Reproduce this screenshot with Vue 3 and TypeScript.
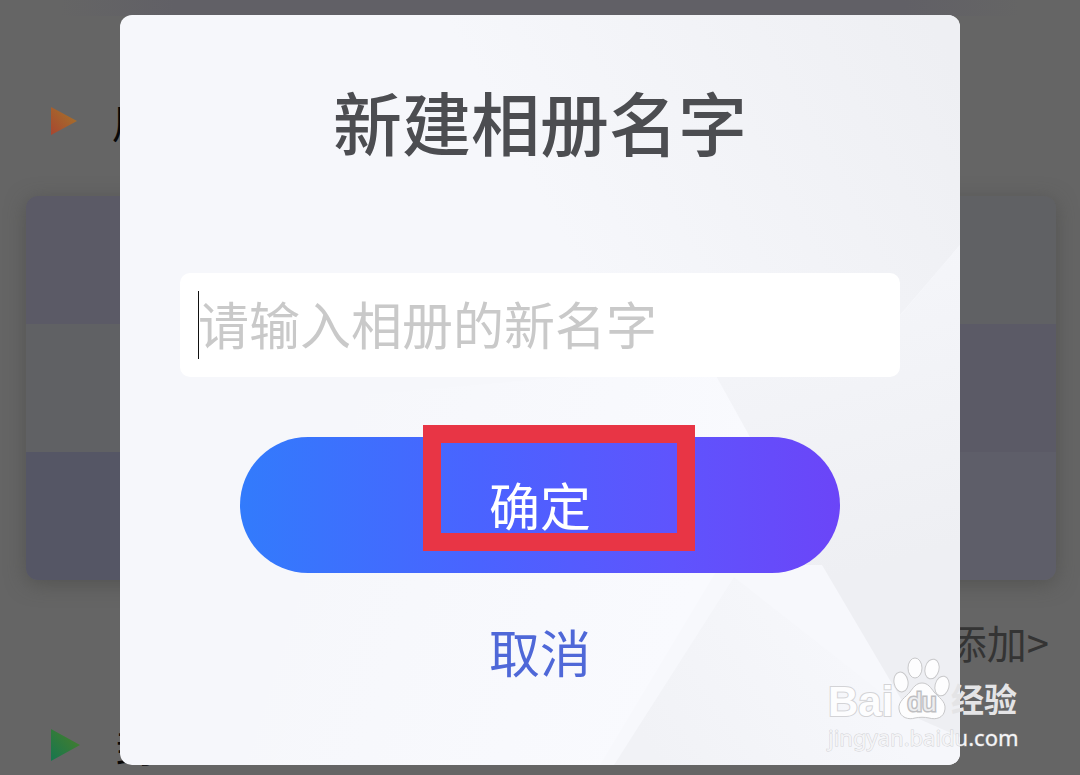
<script setup lang="ts">
import { ref } from 'vue'

const albumName = ref('')
const rows: string[] = ['a', 'b', 'c']
</script>

<template>
  <div class="screen">
    <main class="page" aria-hidden="true">
      <div class="strip"></div>
      <div class="heading first">
        <svg class="marker" viewBox="0 0 30 34">
          <defs>
            <linearGradient id="warm" x1="0" y1="1" x2="1" y2="0">
              <stop offset="0" stop-color="#a84630" />
              <stop offset="1" stop-color="#a4782a" />
            </linearGradient>
          </defs>
          <path d="M1 3 27 17 1 31Z" fill="url(#warm)" />
        </svg>
        <span>用</span>
      </div>
      <div class="album">
        <template v-for="row in rows" :key="row">
          <div :class="['cell', 'left-' + row]"></div>
          <div :class="['cell', 'right-' + row]"></div>
        </template>
      </div>
      <div class="add">添加&gt;</div>
      <div class="heading second">
        <svg class="marker" viewBox="0 0 30 34">
          <defs>
            <linearGradient id="cool" x1="0" y1="1" x2="1" y2="0">
              <stop offset="0" stop-color="#16764f" />
              <stop offset="1" stop-color="#4c7f28" />
            </linearGradient>
          </defs>
          <path d="M1 1 30 17 1 33Z" fill="url(#cool)" />
        </svg>
        <span>封</span>
      </div>
    </main>

    <form class="dialog" role="dialog" aria-labelledby="dialog-title" @submit.prevent>
      <svg class="facets" viewBox="0 0 840 750" preserveAspectRatio="none" aria-hidden="true">
        <defs>
          <linearGradient id="f1" gradientUnits="userSpaceOnUse" x1="460" y1="260" x2="840" y2="60">
            <stop offset="0" stop-color="#eeeff3" stop-opacity="0" />
            <stop offset="1" stop-color="#eeeff3" />
          </linearGradient>
          <linearGradient id="f2" gradientUnits="userSpaceOnUse" x1="720" y1="240" x2="800" y2="540">
            <stop offset="0" stop-color="#f5f6fa" />
            <stop offset="1" stop-color="#eeeff3" />
          </linearGradient>
          <linearGradient id="f3" gradientUnits="userSpaceOnUse" x1="180" y1="500" x2="560" y2="620">
            <stop offset="0" stop-color="#f9fafe" stop-opacity="0" />
            <stop offset="1" stop-color="#f9fafe" />
          </linearGradient>
          <linearGradient id="f4" gradientUnits="userSpaceOnUse" x1="520" y1="720" x2="700" y2="600">
            <stop offset="0" stop-color="#f1f2f6" />
            <stop offset="1" stop-color="#f6f7fb" />
          </linearGradient>
        </defs>
        <path d="M0 0H840V230L780 300H0Z" fill="url(#f1)" />
        <path d="M840 230V750H600L590 360H730Z" fill="url(#f2)" />
        <path d="M0 750V400L590 350 640 440 630 560 496 750Z" fill="url(#f3)" />
        <path d="M600 550H702L820 750H480Z" fill="#f7f8fc" />
        <path d="M614 562 494 750H840V722L790 700Z" fill="url(#f4)" />
      </svg>
      <h1 id="dialog-title">新建相册名字</h1>
      <div class="field">
        <input v-model="albumName" type="text" aria-label="新建相册名字" placeholder="请输入相册的新名字" />
        <i class="caret"></i>
      </div>
      <button class="confirm" type="submit">
        确定
        <span class="highlight"></span>
      </button>
      <button class="cancel" type="button">取消</button>
    </form>

    <div class="watermark">
      <div class="brand">
        <span class="bai">Bai</span>
        <span class="paw">
          <svg viewBox="0 0 58 64" aria-hidden="true">
            <g fill="#fdfdfe" stroke="#c8c8ca" stroke-width="1">
              <ellipse cx="8" cy="26" rx="7" ry="10" transform="rotate(-10 8 26)" />
              <ellipse cx="22" cy="12" rx="7" ry="10" />
              <ellipse cx="39" cy="13" rx="7" ry="10" transform="rotate(14 39 13)" />
              <ellipse cx="49" cy="30" rx="7" ry="10" transform="rotate(14 49 30)" />
              <path d="M29 27C23 27 20 32 17 36C13 41 5 45 6 53C7 62 16 64 22 62C27 61 31 61 36 62C43 64 51 62 52 53C53 45 45 41 41 36C38 32 35 27 29 27Z" />
            </g>
          </svg>
          <span class="du">du</span>
        </span>
        <span class="jingyan">经验</span>
      </div>
      <div class="site">jingyan.baidu.com</div>
    </div>
  </div>
</template>

<style>
body {
  margin: 0;
  background: #656565;
}
</style>

<style scoped>
* {
  box-sizing: border-box;
}

.screen {
  position: relative;
  min-height: 100vh;
  overflow: hidden;
  background: #656565;
  font-family: "Noto Sans CJK SC", sans-serif;
}

.page {
  position: absolute;
  inset: 0;
  display: flex;
  flex-direction: column;
  overflow: hidden;
}

.strip {
  flex: none;
  height: 16px;
  margin: 0 60px;
  background: linear-gradient(90deg, #656565, #616066 12%, #616066 88%, #656565);
}

.heading {
  display: flex;
  flex: none;
  align-items: center;
  gap: 32px;
  height: 60px;
  padding-left: 50px;
  font-size: 40px;
  line-height: 60px;
  color: #080808;
}

.first {
  margin-top: 75px;
}

.marker {
  width: 30px;
  height: 34px;
}

.album {
  display: grid;
  flex: none;
  grid-template-columns: 1fr 1fr;
  grid-template-rows: repeat(3, 128px);
  height: 384px;
  margin: 45px 24px 0 26px;
  overflow: hidden;
  border-radius: 12px;
  box-shadow: 0 4px 20px rgb(70 70 65 / 55%);
}

.left-a,
.right-b {
  background: #5b5a66;
}

.right-a,
.left-b {
  background: #606164;
}

.left-c {
  background: #555665;
}

.right-c {
  background: #5e5e69;
}

.add {
  flex: none;
  height: 64px;
  margin-top: 30px;
  padding-right: 31px;
  font-size: 40px;
  line-height: 64px;
  text-align: right;
  color: #343434;
}

.second {
  gap: 36px;
  margin-top: 41px;
}

.dialog {
  position: absolute;
  top: 15px;
  right: 120px;
  left: 120px;
  display: flex;
  flex-direction: column;
  align-items: center;
  padding: 56px 60px 76px;
  overflow: hidden;
  border-radius: 12px;
  background: #f6f7fb;
}

.facets {
  position: absolute;
  inset: 0;
  width: 100%;
  height: 100%;
}

h1 {
  position: relative;
  margin: 0;
  font-size: 69px;
  font-weight: 500;
  line-height: 100px;
  color: #4c4d51;
}

.field {
  position: relative;
  width: 100%;
  margin-top: 102px;
}

input {
  display: block;
  width: 100%;
  height: 104px;
  padding: 0 18px 4px;
  border: 0;
  border-radius: 10px;
  outline: 0;
  background: #fff;
  font: 51px/76px "Noto Sans CJK SC", sans-serif;
  color: #333;
}

input::placeholder {
  color: #c9c9c9;
  opacity: 1;
}

.caret {
  position: absolute;
  top: 18px;
  left: 18px;
  width: 1px;
  height: 68px;
  background: #111;
}

button {
  position: relative;
  padding: 0;
  border: 0;
  background: none;
  font: 51px/76px "Noto Sans CJK SC", sans-serif;
}

.confirm {
  width: calc(100% - 120px);
  height: 136px;
  padding-bottom: 2px;
  margin-top: 60px;
  border-radius: 68px;
  background: linear-gradient(90deg, #327bfc, #4a63ff 40%, #5f54fd 72%, #6b45f8);
  color: #fff;
}

.highlight {
  position: absolute;
  top: -12px;
  right: 145px;
  bottom: 22px;
  left: 183px;
  border: 18px solid #e83545;
}

.cancel {
  margin-top: 40px;
  color: #4f68d8;
}

.watermark {
  position: absolute;
  right: 58px;
  bottom: 23px;
  width: 194px;
  color: #e4e4e6;
}

.brand {
  display: flex;
  align-items: flex-end;
  height: 62px;
}

.bai {
  flex: none;
  width: 65px;
  font: 700 42px/36px "Liberation Sans", sans-serif;
  color: #fdfdfe;
  -webkit-text-stroke: 2px #d3d3d6;
  paint-order: stroke fill;
}

.paw {
  position: relative;
  flex: none;
  width: 58px;
  height: 64px;
}

.paw svg {
  display: block;
  width: 100%;
  height: 100%;
}

.du {
  position: absolute;
  right: 0;
  bottom: 4px;
  left: 0;
  text-align: center;
  font: 26px/28px "Liberation Sans", sans-serif;
  color: #ededef;
  -webkit-text-stroke: 3px #bfbfc2;
  paint-order: stroke fill;
}

.jingyan {
  margin-bottom: 4px;
  font-size: 33px;
  font-weight: 700;
  line-height: 36px;
}

.site {
  margin-top: 2px;
  font: 22px/30px "Noto Sans", sans-serif;
  color: #f4f4f6;
  -webkit-text-stroke: 1px rgb(185 185 188 / 60%);
  paint-order: stroke fill;
}
</style>
